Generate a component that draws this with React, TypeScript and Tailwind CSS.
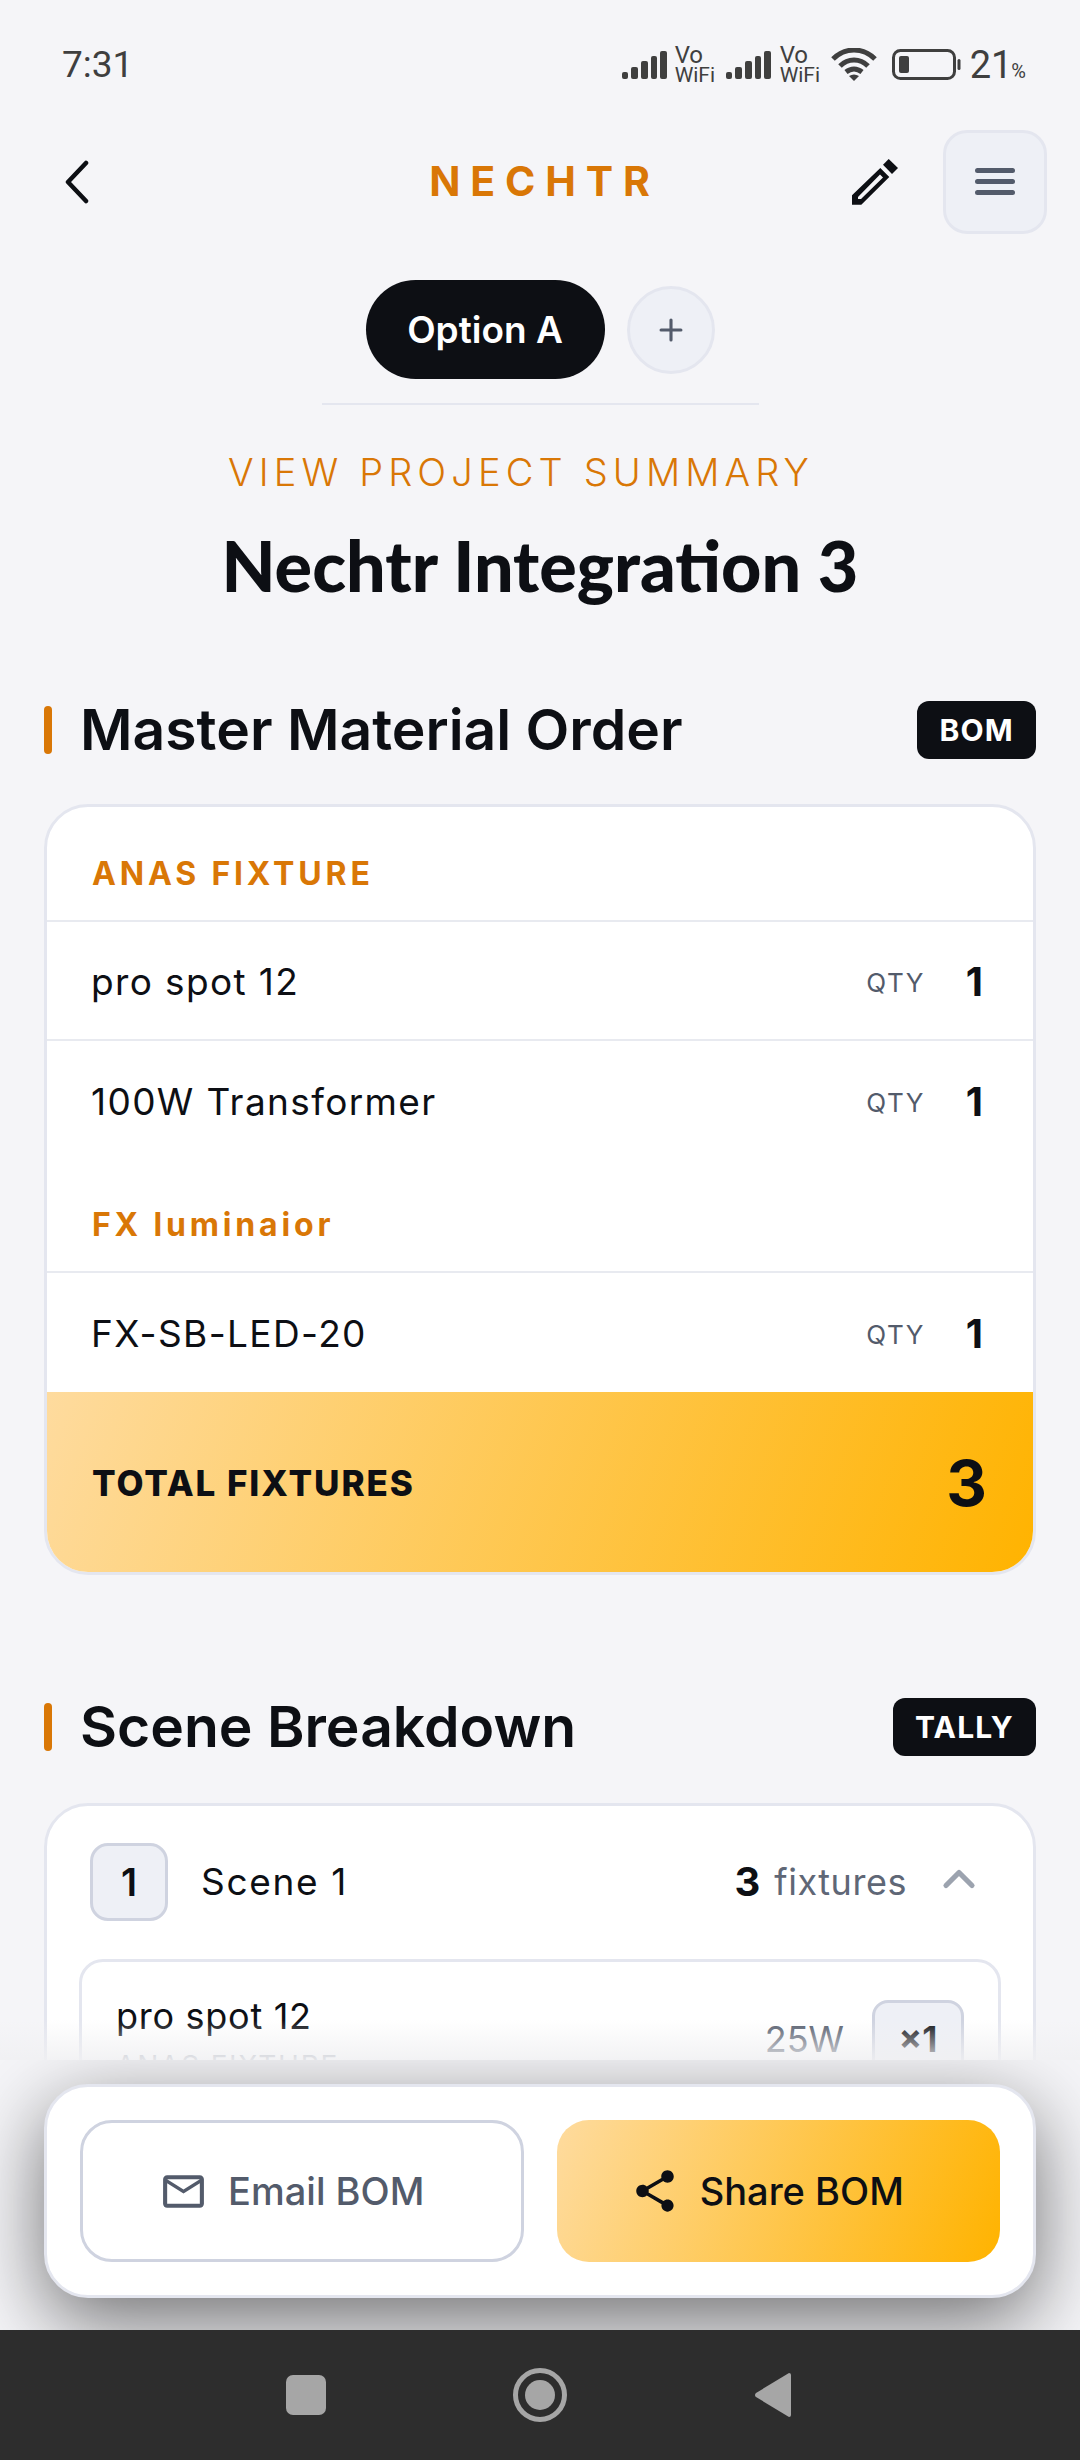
import { Plus, ChevronUp } from "lucide-react";
import { MdMailOutline, MdShare } from "react-icons/md";

function Signal() {
  return (
    <svg width="45" height="28" viewBox="0 0 45 28" fill="#3f3f3f">
      <rect x="0" y="21" width="6" height="7" rx="2" />
      <rect x="9" y="16" width="7" height="12" rx="2" />
      <rect x="19" y="10" width="7" height="18" rx="2" />
      <rect x="29" y="5" width="6" height="23" rx="2" />
      <rect x="38" y="0" width="7" height="28" rx="2" />
    </svg>
  );
}

function VoWifi() {
  return (
    <div className="flex w-[42px] flex-col items-start font-['Roboto',sans-serif] text-[21px] leading-[20px] text-[#3f3f3f]">
      <span className="text-[24px]">Vo</span>
      <span>WiFi</span>
    </div>
  );
}

function StatusBar() {
  return (
    <div className="flex h-[130px] items-center justify-between pb-[1px] pl-[62px] pr-[54px] font-['Roboto',sans-serif] text-[#3f3f3f]">
      <span className="text-[37px] leading-[44px]">7:31</span>
      <div className="flex items-center">
        <Signal />
        <div className="ml-[8px]"><VoWifi /></div>
        <div className="ml-[9px]"><Signal /></div>
        <div className="ml-[9px]"><VoWifi /></div>
        <svg className="ml-[9px]" width="46" height="34" viewBox="0 0 46 34" fill="none" stroke="#3f3f3f" strokeWidth="5">
          <path d="M2 11 C14 -1 32 -1 44 11" />
          <path d="M9 18 C17 10 29 10 37 18" />
          <path d="M15 24 C20 20 26 20 31 24" />
          <path d="M18 28 Q23 25 28 28 L23 33 Z" fill="#3f3f3f" stroke="none" />
        </svg>
        <svg className="ml-[15px]" width="69" height="31" viewBox="0 0 69 31" fill="none">
          <rect x="1.5" y="1.5" width="61" height="28" rx="7" stroke="#3f3f3f" strokeWidth="3" />
          <rect x="7" y="7" width="10" height="17" rx="2" fill="#3f3f3f" />
          <rect x="65.5" y="10" width="3" height="11" rx="1.5" fill="#3f3f3f" />
        </svg>
        <span className="ml-[9px] text-[38px] leading-[44px]">21</span>
        <span className="ml-[-1px] mt-[12px] text-[20px] leading-[20px]">%</span>
      </div>
    </div>
  );
}

function Header() {
  return (
    <div className="relative flex h-[103px] items-center justify-between pl-[64px] pr-[33px]">
      <svg width="26" height="44" viewBox="0 0 26 44" fill="none" stroke="#0d0f14" strokeWidth="4.5" strokeLinecap="round" strokeLinejoin="round">
        <path d="M22 3 L4 22 L22 41" />
      </svg>
      <span className="absolute left-0 right-0 pl-[9px] text-center text-[41px] font-bold tracking-[0.24em] text-[#d97706]">NECHTR</span>
      <div className="flex items-center gap-[45px]">
        <svg width="46" height="46" viewBox="0 0 46 46" fill="#0d0f14" fillRule="evenodd">
          <path d="M36.7 0 L46 9 L40 15 L31 5.7 Z" />
          <path d="M28.3 9 L37.3 18 L9.3 45.7 L0 45.7 L0 36.3 Z M28 15.5 L31 18.5 L9 40 L6 40 L6 38 Z" />
        </svg>
        <div className="flex h-[104px] w-[104px] items-center justify-center rounded-[24px] border-[3px] border-[#e4e6ef] bg-[#eef0f6]">
          <svg width="40" height="27" viewBox="0 0 40 27" fill="#535b6b">
            <rect x="0" y="0" width="40" height="5" rx="2.5" />
            <rect x="0" y="11" width="40" height="5" rx="2.5" />
            <rect x="0" y="22" width="40" height="5" rx="2.5" />
          </svg>
        </div>
      </div>
    </div>
  );
}

function SectionTitle({ title, badge }: { title: string; badge: string }) {
  return (
    <div className="flex items-center justify-between">
      <div className="flex items-center gap-[28px]">
        <div className="h-[48px] w-[8px] rounded-full bg-[#d97706]" />
        <h2 className="text-[57px] font-semibold leading-[68px] text-[#0d0f14]">{title}</h2>
      </div>
      <span className="flex h-[58px] items-center rounded-[12px] bg-[#0d0f14] px-[22px] text-[30px] font-bold tracking-[0.04em] text-white">{badge}</span>
    </div>
  );
}

function GroupLabel({ label, tall }: { label: string; tall?: boolean }) {
  return <div className={`flex items-end border-b-2 border-[#e8eaf0] px-[45px] pb-[26px] text-[32px] font-bold leading-[40px] tracking-[0.12em] text-[#d97706] ${tall ? "h-[115px]" : "h-[113px]"}`}>{label}</div>;
}

function QtyRow({ name, border }: { name: string; border?: boolean }) {
  return (
    <div className={`flex h-[119px] items-center justify-between pl-[44px] pr-[50px] pt-[2px] ${border ? "border-b-2 border-[#e8eaf0]" : ""}`}>
      <span className="text-[37px] tracking-[0.037em] text-[#0d0f14]">{name}</span>
      <div className="flex items-center">
        <span className="pt-[2px] text-[26px] tracking-[0.06em] text-[#535b6b]">QTY</span>
        <span className="w-[58px] text-right text-[40px] font-bold text-[#0d0f14]">1</span>
      </div>
    </div>
  );
}

function MaterialCard() {
  return (
    <div className="mt-[40px] overflow-hidden rounded-[44px] border-[3px] border-[#e4e6ef] bg-white">
      <GroupLabel label="ANAS FIXTURE" tall />
      <QtyRow name="pro spot 12" border />
      <QtyRow name="100W Transformer" />
      <GroupLabel label="FX luminaior" />
      <QtyRow name="FX-SB-LED-20" />
      <div className="flex h-[180px] items-center justify-between bg-[linear-gradient(110deg,#fedb9e,#ffb300)] pl-[45px] pr-[46px] pt-[2px]">
        <span className="text-[35px] font-extrabold tracking-[0.055em] text-[#0d0f14]">TOTAL FIXTURES</span>
        <span className="text-[63px] font-bold text-[#0d0f14]">3</span>
      </div>
    </div>
  );
}

function SceneCard() {
  return (
    <div className="mt-[42px] rounded-[44px] border-[3px] border-[#e4e6ef] bg-white px-[32px] pb-[40px] pt-[37px]">
      <div className="flex items-center justify-between pl-[11px] pr-[16px]">
        <div className="flex items-center gap-[33px]">
          <div className="flex h-[78px] w-[78px] items-center justify-center rounded-[18px] border-[3px] border-[#cfd3e0] bg-[#eef0f6] text-[38px] font-semibold text-[#0d0f14]">1</div>
          <span className="text-[37px] tracking-[0.045em] text-[#0d0f14]">Scene 1</span>
        </div>
        <div className="flex items-center">
          <span className="text-[40px] font-bold text-[#0d0f14]">3</span>
          <span className="ml-[14px] text-[36px] tracking-[0.015em] text-[#5f6776]">fixtures</span>
          <ChevronUp size={52} strokeWidth={2.4} className="mb-[6px] ml-[26px] text-[#9ca3af]" />
        </div>
      </div>
      <div className="mt-[38px] rounded-[24px] border-[3px] border-[#e4e6ef] bg-white py-[32px] pl-[34px] pr-[34px]">
        <div className="flex items-start justify-between">
          <div className="flex flex-col">
            <span className="text-[36px] leading-[44px] tracking-[0.02em] text-[#0d0f14]">pro spot 12</span>
            <span className="mt-[7px] text-[28px] tracking-[0.065em] text-[#9ca3af]">ANAS FIXTURE</span>
          </div>
          <div className="mt-[6px] flex items-center gap-[28px]">
            <span className="text-[36px] text-[#535b6b]">25W</span>
            <span className="flex h-[78px] w-[92px] items-center justify-center rounded-[16px] border-[3px] border-[#cfd3e0] bg-[#eef0f6] text-[35px] font-bold text-[#0d0f14]">×1</span>
          </div>
        </div>
      </div>
    </div>
  );
}

function Footer() {
  return (
    <div className="relative z-10 h-[270px] overflow-hidden bg-[#f5f5f8] px-[44px] pt-[24px]">
      <div className="grid h-[214px] grid-cols-2 gap-[33px] rounded-[44px] border-[3px] border-[#e4e6ef] bg-white p-[33px] shadow-[0_24px_80px_rgba(0,0,0,0.55)]">
        <div className="flex items-center justify-center gap-[20px] rounded-[32px] border-[3px] border-[#cfd3e0] bg-white pr-[20px] text-[38px] font-medium text-[#535b6b]">
          <MdMailOutline size={49} />
          Email BOM
        </div>
        <div className="flex items-center justify-center gap-[20px] rounded-[32px] bg-[linear-gradient(110deg,#fedb9e,#ffb300)] pr-[23px] text-[38px] font-medium text-[#0d0f14]">
          <MdShare size={50} />
          Share BOM
        </div>
      </div>
    </div>
  );
}

function NavBar() {
  return (
    <div className="relative z-20 flex h-[130px] items-center justify-center gap-[187px] bg-[#2d2d2d] pr-[2px]">
      <div className="h-[40px] w-[40px] rounded-[7px] bg-[#a6a6a6]" />
      <div className="flex h-[54px] w-[54px] items-center justify-center rounded-full border-[5px] border-[#a6a6a6]">
        <div className="h-[30px] w-[30px] rounded-full bg-[#a6a6a6]" />
      </div>
      <svg width="38" height="46" viewBox="0 0 38 46" fill="#a6a6a6">
        <path d="M35 1 a2 2 0 0 1 2 2 V43 a2 2 0 0 1 -2 2 L2 25 a2.5 2.5 0 0 1 0 -4 Z" />
      </svg>
    </div>
  );
}

export default function App() {
  return (
    <div className="flex h-[2460px] w-[1080px] flex-col overflow-hidden bg-[#f5f5f8] font-['Inter',sans-serif]">
      <div className="relative min-h-0 flex-1 overflow-hidden">
        <StatusBar />
        <Header />
        <div className="mt-[47px] flex items-center justify-center gap-[22px]">
          <div className="flex h-[99px] w-[239px] items-center justify-center rounded-full bg-[#0d0f14] text-[37px] font-semibold text-white">Option A</div>
          <div className="flex h-[88px] w-[88px] items-center justify-center rounded-full border-[3px] border-[#e4e6ef] bg-[#eef0f6]">
            <Plus size={34} strokeWidth={2.2} className="text-[#535b6b]" />
          </div>
        </div>
        <div className="mx-auto mt-[24px] h-[2px] w-[437px] bg-[#e4e6ef]" />
        <div className="mt-[45px] pr-[38px] text-center text-[38px] font-light leading-[44px] tracking-[0.135em] text-[#d97706]">VIEW PROJECT SUMMARY</div>
        <h1 className="mt-[29px] text-center font-['Lato',sans-serif] text-[70px] font-black leading-[84px] text-[#0d0f14]">Nechtr Integration 3</h1>
        <div className="px-[44px] pt-[89px]">
          <SectionTitle title="Master Material Order" badge="BOM" />
          <MaterialCard />
          <div className="mt-[118px]">
            <SectionTitle title="Scene Breakdown" badge="TALLY" />
          </div>
          <SceneCard />
        </div>
        <div className="absolute bottom-0 left-0 right-0 h-[40px] bg-gradient-to-b from-transparent to-[#f0f0f2]/85" />
      </div>
      <Footer />
      <NavBar />
    </div>
  );
}
